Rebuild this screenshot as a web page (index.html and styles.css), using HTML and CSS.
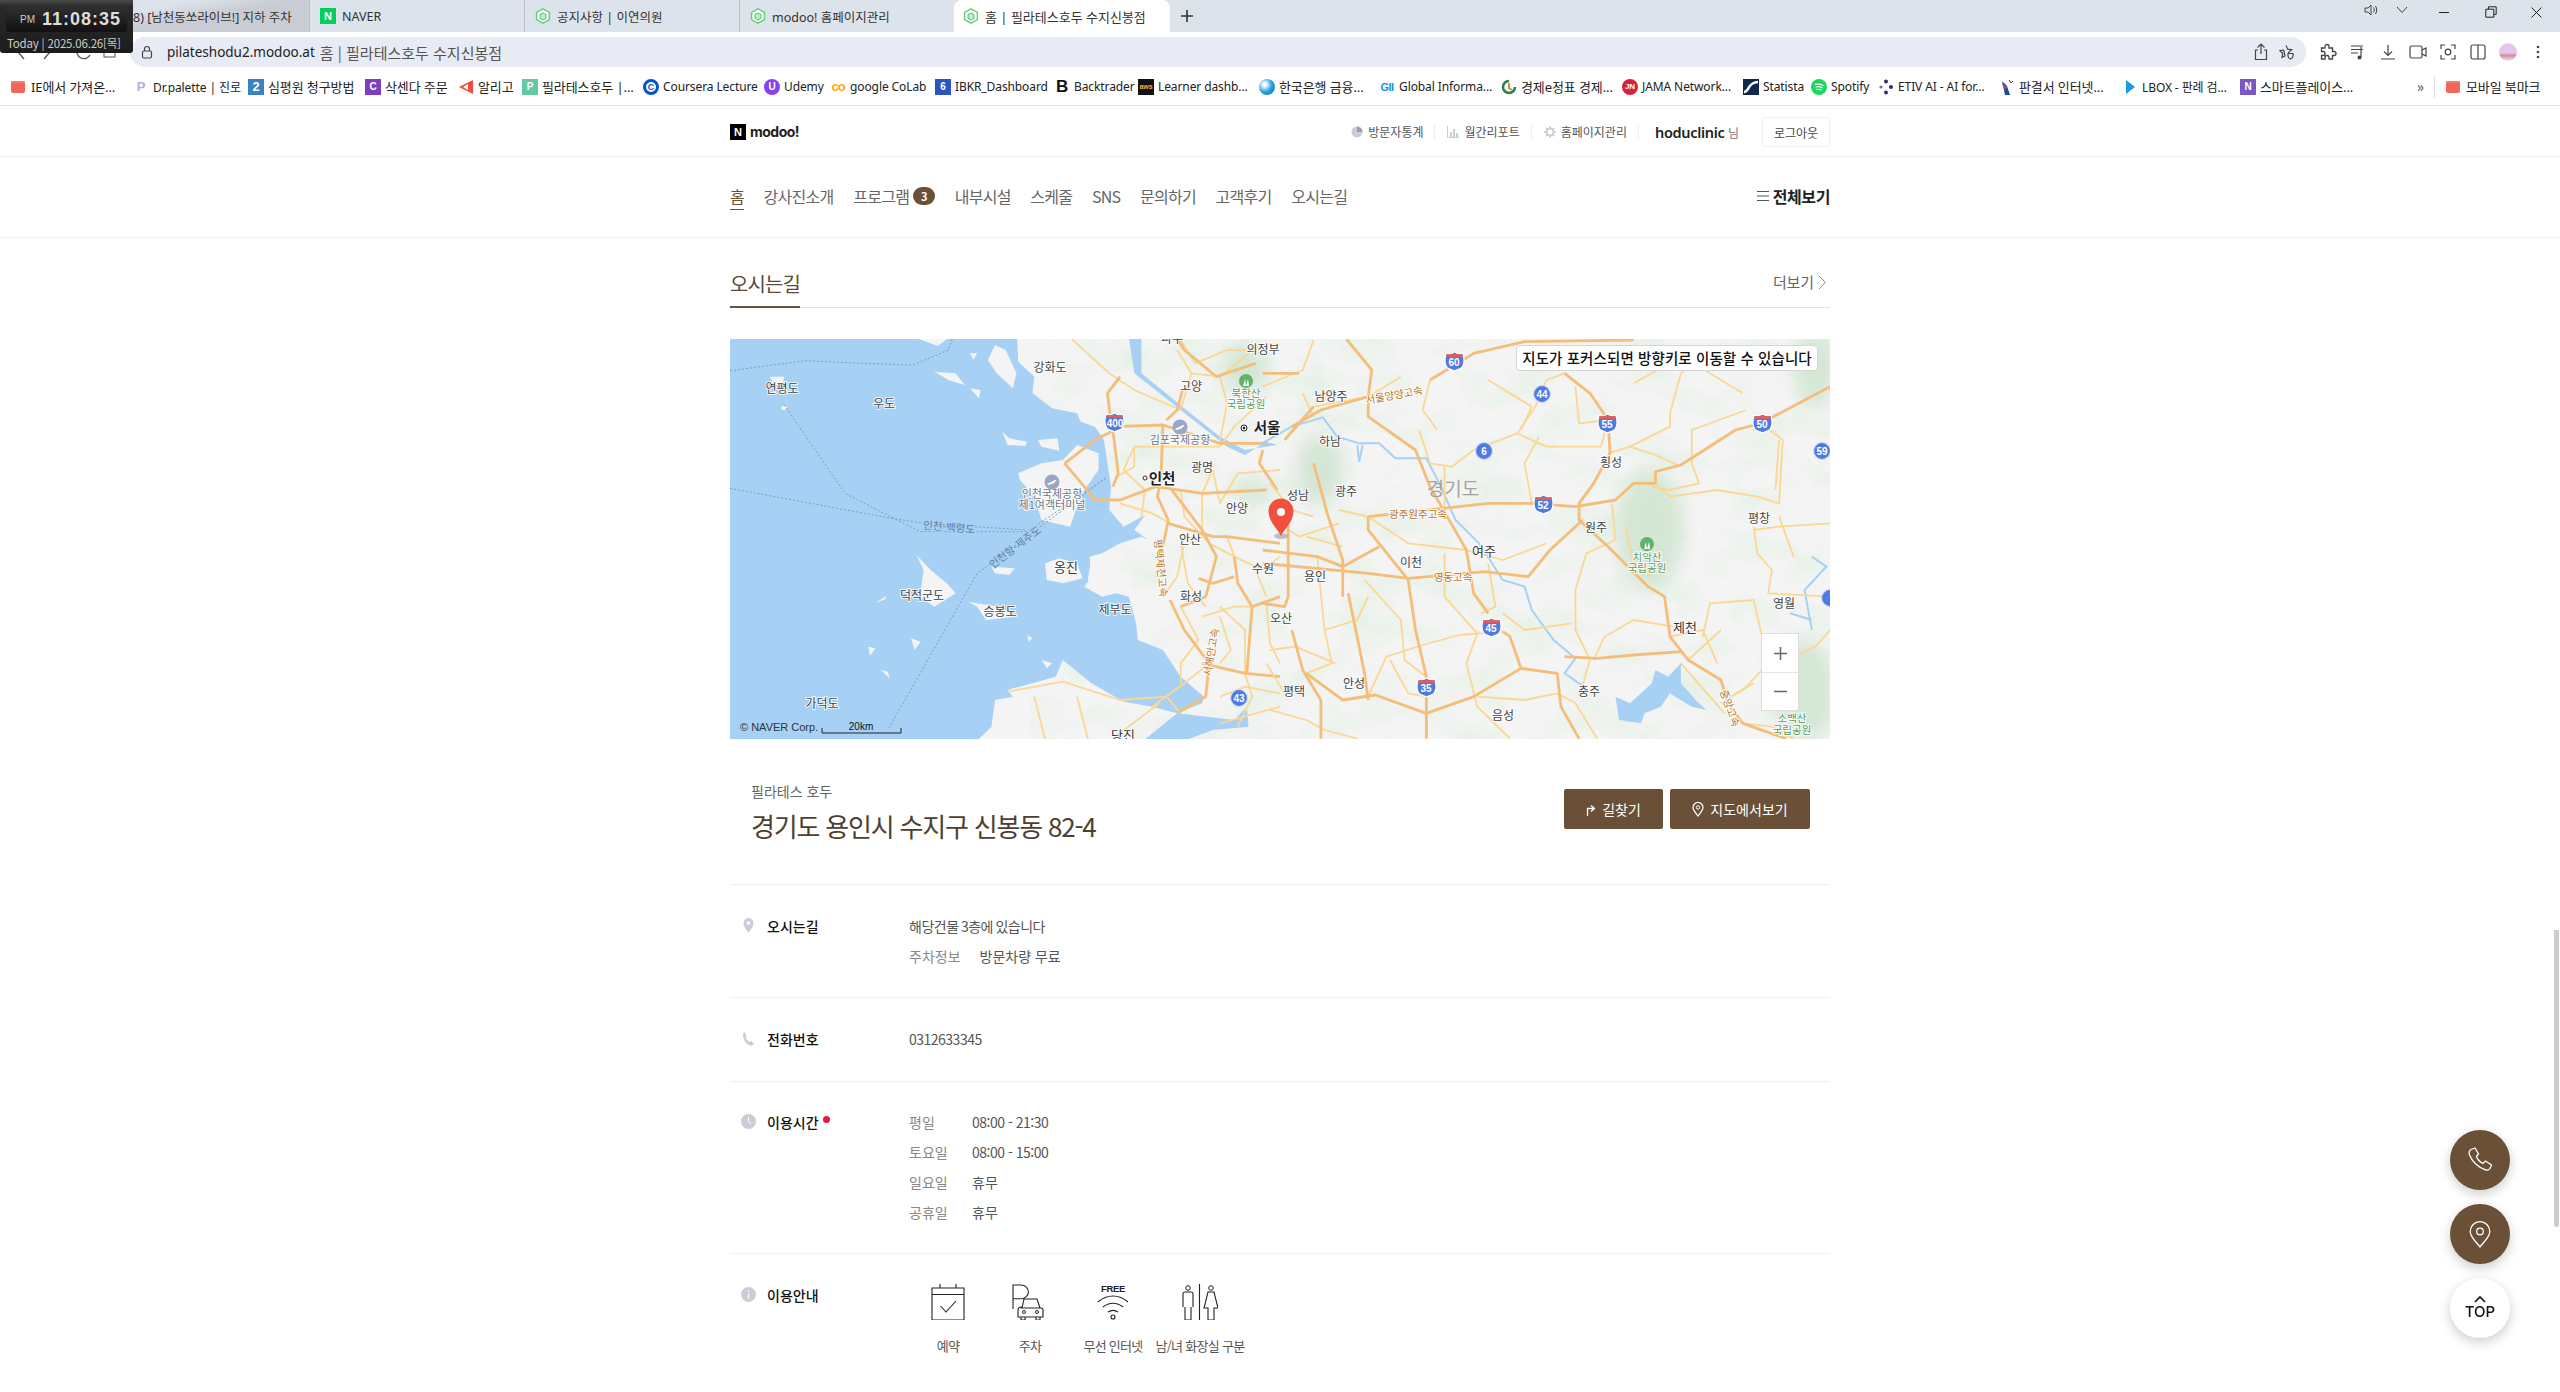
FILE: index.html
```html
<!DOCTYPE html>
<html lang="ko">
<head>
<meta charset="utf-8">
<title>홈 | 필라테스호두 수지신봉점</title>
<link rel="stylesheet" href="styles.css">
</head>
<body>
<svg class="defs" width="0" height="0" aria-hidden="true">
  <defs>
    <symbol id="hexfav" viewBox="0 0 16 16"><path d="M8 .8 14.400 4.400v7.200L8 15.200 1.600 11.600V4.400z" fill="#fff" stroke="#5fd47d" stroke-width="1.500"/><path d="M5 10.500V6.500L8 5l3 1.500v4L8 12z" fill="#bdecc8" stroke="#4cb868" stroke-width=".9"/></symbol>
    <symbol id="shield" viewBox="0 0 21 21"><path d="M2 2.500c3 1 5.500.5 8.500-1.500 3 2 5.500 2.500 8.500 1.500 1.500 6 1.500 11-1 14-2 2-5 2-7.500 3.500-2.500-1.500-5.500-1.500-7.500-3.500-2.500-3-2.500-8-1-14z" fill="#4f7ae0" stroke="#fff" stroke-width="1.200"/><rect x="2.500" y="3.200" width="16" height="2.600" fill="#ef5a4a"/></symbol>
  </defs>
</svg>

<div class="clock">
  <div class="clock-panel"><span class="clock-ap">PM</span><span class="clock-time">11:08:35</span></div>
  <div class="clock-date">Today | 2025.06.26[목]</div>
</div>

<header class="browser">
  <div class="tabs">
    <div class="tab tab-thumb"><span class="tab-title">8) [남천동쏘라이브!] 지하 주차</span></div>
    <div class="tab"><span class="fav-naver">N</span><span class="tab-title">NAVER</span></div>
    <div class="tab"><svg class="fav"><use href="#hexfav"/></svg><span class="tab-title">공지사항 | 이연의원</span></div>
    <div class="tab"><svg class="fav"><use href="#hexfav"/></svg><span class="tab-title">modoo! 홈페이지관리</span></div>
    <div class="tab tab-active"><svg class="fav"><use href="#hexfav"/></svg><span class="tab-title">홈 | 필라테스호두 수지신봉점</span></div>
    <div class="tab-plus">
      <svg width="14" height="14" viewBox="0 0 14 14"><path d="M7 1v12M1 7h12" stroke="#333" stroke-width="1.600"/></svg>
    </div>
    <div class="win-controls">
      <svg class="win-sound" width="16" height="14" viewBox="0 0 16 14"><path d="M2 5h3l3-3v10L5 9H2zM10.500 4.500c1 1.500 1 3.500 0 5M12.500 3c1.600 2.500 1.600 5.500 0 8" fill="none" stroke="#444"/></svg>
      <svg class="win-chev" width="12" height="8" viewBox="0 0 12 8"><path d="M1 1l5 5.500L11 1" fill="none" stroke="#444"/></svg>
      <svg class="win-min" width="10" height="10" viewBox="0 0 10 10"><path d="M0 5.500h10" stroke="#222"/></svg>
      <svg class="win-rest" width="12" height="12" viewBox="0 0 12 12"><path d="M3.500 3V.8h7.700v7.500H9M.8 3.200h8v8H.8z" fill="none" stroke="#222"/></svg>
      <svg class="win-close" width="11" height="11" viewBox="0 0 11 11"><path d="M.5.5l10 10M10.500.5l-10 10" stroke="#222"/></svg>
    </div>
  </div>

  <div class="toolbar">
    <div class="nav-btns">
      <svg width="130" height="30" viewBox="0 0 130 30"><path d="M24 8l-6 7 6 7M44 8l6 7-6 7M86 8a7 7 0 1 0 4 10" fill="none" stroke="#555" stroke-width="1.300"/><rect x="104" y="6" width="11" height="14" fill="none" stroke="#555"/></svg>
    </div>
    <div class="omnibox">
      <svg class="lock" width="12" height="14" viewBox="0 0 12 14"><rect x="1.500" y="6" width="9" height="7" rx="1.500" fill="none" stroke="#444" stroke-width="1.200"/><path d="M3.500 6V4a2.500 2.500 0 0 1 5 0v2" fill="none" stroke="#444" stroke-width="1.200"/></svg>
      <span class="url">pilateshodu2.modoo.at</span><span class="url-title">홈 | 필라테스호두 수지신봉점</span>
      <div class="omni-right">
        <svg width="14" height="18" viewBox="0 0 14 18"><path d="M7 1v10M3.500 4.500 7 1l3.500 3.500M4 7H1.500v9.500h11V7H10" fill="none" stroke="#444" stroke-width="1.200"/></svg>
        <svg width="16" height="16" viewBox="0 0 16 16"><path d="M7 1.500l1.700 3.700 4 .5-3 2.700.6 1M6 12l-3 1.500.7-4-3-2.800 4-.5z" fill="none" stroke="#444" stroke-width="1.200"/><path d="M9 9.500h5v2.500c0 1.500-1.200 2.500-2.500 3-1.300-.5-2.500-1.500-2.500-3z" fill="none" stroke="#444" stroke-width="1.200"/></svg>
      </div>
    </div>
    <div class="tool-icons">
      <svg width="18" height="18" viewBox="0 0 18 18"><path d="M6 3.500a2 2 0 0 1 4 0V5h3.500v3.500H15a2 2 0 0 1 0 4h-1.500V16H10v-1.500a2 2 0 0 0-4 0V16H2.500v-3.500H4a2 2 0 0 0 0-4H2.500V5H6z" fill="none" stroke="#444" stroke-width="1.300"/></svg>
      <svg width="14" height="18" viewBox="0 0 14 18"><path d="M0 3h12M0 6.500h12M0 10h7M10 4v10" stroke="#444" stroke-width="1.200" fill="none"/><circle cx="8.500" cy="14.500" r="2" fill="#444"/></svg>
      <svg width="16" height="18" viewBox="0 0 16 18"><path d="M8 2v10M4 8.500 8 12.500 12 8.500M1 16h14" fill="none" stroke="#444" stroke-width="1.200"/></svg>
      <svg width="18" height="14" viewBox="0 0 18 14"><rect x="1" y="1" width="12" height="12" rx="1.500" fill="none" stroke="#444" stroke-width="1.200"/><path d="M13 5l4-2v8l-4-2" fill="none" stroke="#444" stroke-width="1.200"/></svg>
      <svg width="16" height="16" viewBox="0 0 16 16"><path d="M1 5V1h4M11 1h4v4M15 11v4h-4M5 15H1v-4" fill="none" stroke="#444" stroke-width="1.200"/><circle cx="8" cy="8" r="2.800" fill="none" stroke="#444" stroke-width="1.200"/></svg>
      <svg width="16" height="16" viewBox="0 0 16 16"><rect x="1" y="1" width="14" height="14" rx="2" fill="none" stroke="#444" stroke-width="1.200"/><path d="M8 1v14" stroke="#444" stroke-width="1.200"/></svg>
      <span class="avatar"></span>
      <svg width="4" height="14" viewBox="0 0 4 14"><circle cx="2" cy="2" r="1.300" fill="#444"/><circle cx="2" cy="7" r="1.300" fill="#444"/><circle cx="2" cy="12" r="1.300" fill="#444"/></svg>
    </div>
  </div>

  <div class="bookmarks">
    <div class="bm ko"><span class="folder"></span>IE에서 가져온...</div>
    <div class="bm"><span class="ico ico-dr">P</span>Dr.palette | 진로</div>
    <div class="bm ko"><span class="ico ico-2">2</span>심평원 청구방법</div>
    <div class="bm ko"><span class="ico ico-c">C</span>삭센다 주문</div>
    <div class="bm ko"><svg class="ico-svg" viewBox="0 0 16 16"><path d="M15 1v14L1 8z" fill="#ef4b3f"/><path d="M10 5v6L5 8z" fill="#fff"/></svg>알리고</div>
    <div class="bm ko"><span class="ico ico-p">P</span>필라테스호두 |...</div>
    <div class="bm"><span class="ico ico-cs">C</span>Coursera Lecture</div>
    <div class="bm"><span class="ico ico-u">U</span>Udemy</div>
    <div class="bm"><span class="ico ico-co">co</span>google CoLab</div>
    <div class="bm"><span class="ico ico-ib">6</span>IBKR_Dashboard</div>
    <div class="bm"><span class="ico ico-b">B</span>Backtrader</div>
    <div class="bm"><span class="ico ico-aws">aws</span>Learner dashb...</div>
    <div class="bm ko"><span class="ico ico-bok"></span>한국은행 금융...</div>
    <div class="bm"><span class="ico ico-gii">GII</span>Global Informa...</div>
    <div class="bm ko"><svg class="ico-svg" viewBox="0 0 16 16"><path d="M8 2a6 6 0 1 0 6 6" fill="none" stroke="#2f7d4a" stroke-width="2.500"/><path d="M8 4v5l3 2" fill="none" stroke="#b59a3a" stroke-width="2"/></svg>경제e정표 경제...</div>
    <div class="bm"><span class="ico ico-jn">JN</span>JAMA Network...</div>
    <div class="bm"><svg class="ico-svg" viewBox="0 0 16 16"><rect width="16" height="16" fill="#12284a"/><path d="M1 13c5 0 4-10 14-10" fill="none" stroke="#fff" stroke-width="2.500"/></svg>Statista</div>
    <div class="bm"><svg class="ico-svg" viewBox="0 0 16 16"><circle cx="8" cy="8" r="8" fill="#1ed760"/><path d="M4 5.500c3-.8 6-.5 8.500 1M4.500 8c2.500-.6 5-.4 7 .9M5 10.500c2-.4 4-.3 5.500.7" fill="none" stroke="#fff" stroke-width="1.200"/></svg>Spotify</div>
    <div class="bm"><svg class="ico-svg" viewBox="0 0 16 16"><circle cx="8" cy="2.500" r="2" fill="#2a2f7a"/><circle cx="13" cy="8" r="2" fill="#2a2f7a"/><circle cx="8" cy="13.500" r="2" fill="#2a2f7a"/><circle cx="3" cy="8" r="1.600" fill="#7d5fc0"/></svg>ETIV AI - AI for...</div>
    <div class="bm ko"><svg class="ico-svg" viewBox="0 0 16 16"><path d="M3 2l5 5 3 9H6z" fill="#15508c"/><path d="M3 5l5 3-2 3z" fill="#d8327a"/><path d="M10 1l2 3 2-2" fill="none" stroke="#444"/></svg>판결서 인터넷...</div>
    <div class="bm"><svg class="ico-svg" viewBox="0 0 16 16"><path d="M4 1l9 7-9 7z" fill="#1c9be0"/></svg>LBOX - 판례 검...</div>
    <div class="bm ko"><span class="ico ico-n">N</span>스마트플레이스...</div>
    <div class="bm bm-more">»</div>
    <div class="bm-sep"></div>
    <div class="bm ko"><span class="folder"></span>모바일 북마크</div>
  </div>
</header>

<div class="site">
  <div class="gnb-top">
    <div class="logo"><span class="logo-n">N</span><span class="logo-t">modoo!</span></div>
    <div class="top-links">
      <a class="tl"><svg width="12" height="12" viewBox="0 0 12 12"><circle cx="6" cy="6" r="5.500" fill="#c9ced6"/><path d="M6 6V.5A5.500 5.500 0 0 1 11.500 6z" fill="#9aa0a8"/></svg>방문자통계</a>
      <a class="tl"><svg width="12" height="12" viewBox="0 0 12 12"><path d="M.5 0v11.500H12" fill="none" stroke="#c9ced6"/><path d="M3 6h2v5H3zM6 3h2v8H6zM9 7h2v4H9z" fill="#c9ced6"/></svg>월간리포트</a>
      <a class="tl"><svg width="12" height="12" viewBox="0 0 12 12"><circle cx="6" cy="6" r="3.500" fill="none" stroke="#c9ced6" stroke-width="2"/><path d="M6 0v2.500M6 9.500V12M0 6h2.500M9.500 6H12M1.800 1.800l1.800 1.800M8.400 8.400l1.800 1.800M10.200 1.800 8.400 3.600M3.600 8.400l-1.800 1.800" stroke="#c9ced6" stroke-width="1.500"/></svg>홈페이지관리</a>
      <span class="user"><b>hoduclinic</b> 님</span>
      <button class="logout">로그아웃</button>
    </div>
  </div>

  <nav class="gnb">
    <a class="gi gi-on">홈</a>
    <a class="gi">강사진소개</a>
    <a class="gi">프로그램<span class="badge">3</span></a>
    <a class="gi">내부시설</a>
    <a class="gi">스케줄</a>
    <a class="gi">SNS</a>
    <a class="gi">문의하기</a>
    <a class="gi">고객후기</a>
    <a class="gi">오시는길</a>
    <a class="gi-all"><svg width="14" height="12" viewBox="0 0 14 12"><path d="M1 1.500h12M1 6h12M1 10.500h12" stroke="#555" stroke-width="1"/></svg>전체보기</a>
  </nav>
</div>
<div class="rule"></div>

<main class="site">
  <div class="sec-head">
    <h2 class="sec-title">오시는길</h2>
    <a class="more">더보기<svg width="9" height="15" viewBox="0 0 9 15"><path d="M1 1l6.500 6.500L1 14" fill="none" stroke="#888"/></svg></a>
  </div>

  <div class="map">
    <svg class="map-svg" width="1100" height="400" viewBox="0 -1 1100 400">
      <defs>
        <filter id="forest" x="0" y="0" width="100%" height="100%">
          <feTurbulence type="fractalNoise" baseFrequency="0.018 0.03" numOctaves="4" seed="7"/>
          <feColorMatrix values="0 0 0 0 0.80  0 0 0 0 0.88  0 0 0 0 0.80  2.600 0 0 0 -1.150"/>
        </filter>
        <filter id="soft"><feGaussianBlur stdDeviation="9"/></filter>
      </defs>
      <rect class="land" y="-1" width="1100" height="400"/>
      <rect x="300" y="-1" width="800" height="400" filter="url(#forest)"/>
      <g filter="url(#soft)" class="parks">
        <ellipse cx="920" cy="190" rx="34" ry="60"/>
        <ellipse cx="590" cy="130" rx="24" ry="36"/>
        <ellipse cx="1075" cy="350" rx="30" ry="50"/>
        <ellipse cx="516" cy="30" rx="24" ry="26"/>
        <ellipse cx="520" cy="150" rx="20" ry="12"/>
        <ellipse cx="1085" cy="30" rx="20" ry="40"/>
      </g>

      <!-- west half, in the scale of the crop of the left half -->
      <g transform="translate(-10,-10) scale(.35714,.33333)">
        <path class="sea" d="M28 24H832L835 95 880 140 875 190 930 235 1000 250 1010 275 1050 290 1075 330 1085 400 1095 470 1090 540 1130 590 1190 555 1160 600 1200 630 1180 620 1120 640 1070 670 1035 680 1040 740 1020 770 1070 800 1110 790 1145 800 1165 880 1170 930 1240 960 1290 1040 1355 1100 1350 1120 1280 1150 1210 1130 1130 1115 1040 1060 960 990 940 1040 805 1080 820 1100 770 1110 760 1190 720 1232H28Z"/>
        <path class="sea" d="M1280 1150 1440 1170 1475 1130 1480 1190 1380 1200 1300 1232H1185Z"/>
        <path class="sea" d="M1180 24H1145L1160 130 1290 240 1420 350 1470 375 1530 335 1560 345 1470 360 1400 320 1300 235 1180 130Z"/>
        <g class="land">
          <path d="M835 430 900 400 960 390 1000 345 1060 370 1060 420 1020 480 1000 530 980 590 900 570 880 500 840 450Z"/>
          <path d="M750 90 770 45 800 60 830 130 820 175 775 130Z"/>
          <path d="M790 305 810 325 860 335 855 348 805 345Z"/><path d="M890 330 945 325 950 362 900 350Z"/>
          <path d="M550 675 590 720 635 760 660 790 600 830 560 800 570 720Z"/>
          <path d="M910 700 950 685 1000 700 1015 745 960 760 915 750Z"/>
          <path d="M760 710 825 715 810 735 770 730Z"/>
          <path d="M695 815 780 830 830 860 745 870 720 830Z"/>
          <path d="M140 140 180 140 175 165 150 165Z"/><path d="M172 228 188 228 184 240 172 240Z"/>
          <path d="M600 125 660 130 685 165 640 150Z"/><path d="M700 70 720 70 710 90Z"/><path d="M700 175 730 180 725 205Z"/>
          <path d="M535 925 562 935 545 960Z"/><path d="M415 950 435 955 420 978Z"/><path d="M450 1020 470 1025 475 1045Z"/>
          <path d="M860 915 875 925 865 935Z"/><path d="M900 990 930 1000 915 1015Z"/><path d="M435 820 465 798 462 808Z"/>
          <path d="M1040 680 1110 700 1120 780 1060 790 1030 750Z"/>
          <path d="M550 24 640 24 610 48Z"/>
        </g>
        <g class="ferry">
          <path d="M28 122 240 92 400 100 540 105 640 60 650 27"/>
          <path d="M180 225 350 490 560 605 860 605 1080 445"/>
          <path d="M28 475 480 565 570 580 860 600"/>
          <path d="M1080 445 720 730 470 1200"/>
        </g>
        <g class="rd2">
          <path d="M985 27 1090 130 1160 180 1290 240 1320 130 1280 60"/>
          <path d="M1160 350H1400L1440 290 1530 200"/>
          <path d="M1160 350V410L1110 440"/>
          <path d="M1320 130 1400 140 1480 70"/>
          <path d="M1380 420 1400 520 1450 430 1568 420"/>
          <path d="M1120 520 1210 550 1260 580"/>
          <path d="M1290 640 1310 760 1360 830"/>
          <path d="M1440 680 1520 720 1568 680"/>
          <path d="M1290 830 1340 930 1290 1000 1290 1060"/>
          <path d="M1400 860 1430 960 1400 1000"/>
          <path d="M1350 860 1440 830 1490 830"/>
          <path d="M805 1085 960 1055 1120 1110 1250 1100 1290 1150"/>
          <path d="M880 1100 910 1226M1000 1100 1030 1226M1100 1226 1230 1120"/>
          <path d="M1400 1100 1470 1070 1568 1090M1400 1180 1568 1130"/>
          <path d="M1160 350 1130 420 1190 480 1180 560"/>
          <path d="M1290 480 1300 560 1370 640 1440 680"/>
          <path d="M1380 420 1350 490 1350 600"/>
          <path d="M1300 640 1280 740 1240 800"/>
          <path d="M1420 620 1440 680"/>
          <path d="M1290 30 1330 100 1420 60 1530 60"/>
          <path d="M1400 140 1420 220 1400 330"/>
          <path d="M1500 720 1530 800"/>
          <path d="M1370 1000 1300 1060 1210 1130"/>
          <path d="M1470 1030 1490 1100 1450 1190"/>
          <path d="M1530 820 1540 940 1568 1000"/>
          <path d="M1400 830 1470 900 1470 1030"/>
        </g>
        <g class="rd1">
          <path d="M1105 290 1240 285 1400 340 1530 340"/>
          <path d="M965 400 1050 330 1105 300"/>
          <path d="M965 400 1020 470 1050 510 1120 510 1220 470 1350 490 1530 480"/>
          <path d="M1100 300 1115 430 1100 470"/>
          <path d="M1240 285 1235 440 1225 500 1255 570 1240 650"/>
          <path d="M1255 580 1380 620 1420 620 1568 640"/>
          <path d="M1120 140 1085 190 1095 280"/>
          <path d="M1295 180 1280 240 1250 270"/>
          <path d="M1265 480 1350 600 1390 680 1360 800 1290 830"/>
          <path d="M1260 810 1300 900 1370 1000 1360 1100 1280 1150"/>
          <path d="M1350 1000 1470 1030 1568 1040"/>
          <path d="M1490 830 1475 1030"/>
          <path d="M1440 680 1450 760 1490 830 1568 800"/>
          <path d="M1340 745 1380 760 1440 740"/>
          <path d="M1520 360 1510 400 1560 480"/>
          <path d="M1500 100 1390 140 1300 60 1280 27"/>
        </g>
      </g>

      <!-- east half, in the scale of the crop of the right half -->
      <g transform="translate(540,-10) scale(.36364,.33333)">
        <g class="river">
          <path d="M-30 345 60 290 145 262 185 320 245 340 300 340 345 385 430 385 470 470 510 570 575 640 640 750 700 770 720 840 780 930 840 985 810 1030 870 1075"/>
          <path d="M240 345 245 395 255 345"/>
          <path d="M1490 680 1530 710 1470 780 1490 900"/>
          <path d="M1430 850 1490 870"/>
        </g>
        <path class="sea" d="M950 1100 990 1120 1050 1060 1060 1020 1095 1040 1130 1000 1130 1060 1175 1115 1200 1140 1160 1130 1100 1090 1075 1130 1030 1150 1020 1180 960 1170Z"/>
        <g class="rd2">
          <path d="M-20 170 90 120 120 30M120 230 270 200 360 140M90 190 120 260"/>
          <path d="M560 360 680 310 730 230 760 150 810 130"/>
          <path d="M410 300 440 400 500 410 560 360"/>
          <path d="M680 310 760 350 910 350 930 270 850 280 840 170"/>
          <path d="M930 370 990 350 1100 290 1100 250 1130 130 1190 60"/>
          <path d="M990 350 1060 375 1120 405M1160 400 1160 300 1310 240"/>
          <path d="M1060 460 1100 500 1230 480 1340 500 1400 520 1410 330 1350 280"/>
          <path d="M1330 590 1340 670 1380 720 1370 790 1540 800"/>
          <path d="M1330 600 1400 590 1540 580M1350 280 1420 240 1540 170"/>
          <path d="M940 520 950 630 870 670 840 780 840 900 880 990 850 1100"/>
          <path d="M1110 890 1000 870 920 920 890 990"/>
          <path d="M1190 920 1210 820 1330 810 1370 1000 1310 1070 1240 1120"/>
          <path d="M640 905 520 915 420 945 320 980 270 1100"/>
          <path d="M480 670 480 800 570 910 540 1000 570 1130 660 1226"/>
          <path d="M190 540 270 560 380 640 540 660 640 690 760 640"/>
          <path d="M0 560 80 620 190 580M130 680 150 900 170 1000 100 1030"/>
          <path d="M260 750 360 870 370 990 430 1040M600 700 620 830 580 850"/>
          <path d="M790 1090 840 1120 900 1226M570 1100 700 1110 790 1090"/>
          <path d="M0 1140 100 1170 150 1200 240 1226M-10 1000 40 1090"/>
          <path d="M1300 1180 1380 1190 1440 1226M1130 1000 1250 1150"/>
          <path d="M1440 680 1400 560"/>
          <path d="M0 460 60 540 120 560M100 620 200 650"/>
          <path d="M330 990 380 1090 430 1100M640 850 700 900 830 880"/>
          <path d="M980 600 1000 700 1050 740M1100 920 1190 900 1230 1000"/>
          <path d="M1050 470 1100 480 1180 460 1160 400M1400 330 1390 480"/>
          <path d="M480 410 480 530M740 320 700 400 720 520"/>
          <path d="M1000 160 1100 100 1150 90 1300 190M600 150 720 230 690 300"/>
          <path d="M440 150 420 240 460 300M150 900 240 870 270 800"/>
          <path d="M1400 1000 1500 950 1540 900M1150 990 1240 900"/>
          <path d="M1240 1120 1330 1060M0 960 70 950 180 1000"/>
        </g>
        <g class="rd1">
          <path d="M270 200 270 260 400 360 440 470 540 660 560 790 600 850"/>
          <path d="M270 560 600 520 720 520 840 530 950 510 1000 460 1060 460 1060 425 1130 405 1280 300 1350 280"/>
          <path d="M120 400 160 560 200 690 200 800"/>
          <path d="M-20 660 130 680 200 710 300 650"/>
          <path d="M-20 700 270 730 380 745 590 725 710 740 770 660 860 570"/>
          <path d="M810 130 880 190 930 270 935 370 890 460 850 520 850 570 930 650 1040 770 1085 800 1100 920 1150 990 1240 1050 1260 1120"/>
          <path d="M270 560 270 600 380 750 400 900 430 1040 430 1226"/>
          <path d="M100 1030 200 1110 290 1095 430 1150 560 1100 690 1015 790 1030 800 1130 850 1226"/>
          <path d="M690 1015 660 920 640 905"/>
          <path d="M810 980 900 985 1000 975 1130 965"/>
          <path d="M50 580V800L40 830-20 820"/>
          <path d="M60 900 90 1020 140 1110 140 1226"/>
          <path d="M215 790 260 1030 270 1110"/>
          <path d="M210 27 280 120 270 200 140 240 60 290"/>
          <path d="M440 150 560 70 700 35 1000 30"/>
          <path d="M1260 1120 1300 1180 1420 1226"/>
          <path d="M1350 280 1540 170"/>
          <path d="M-20 130 80 130M120 230 40 330"/>
        </g>
      </g>

      <!-- labels -->
      <g class="lb">
        <text x="320" y="32">강화도</text><text x="52" y="53">연평도</text><text x="154" y="68">우도</text>
        <text x="461" y="51">고양</text><text x="533" y="14">의정부</text><text x="442" y="3" class="lb-r">파주</text>
        <text x="450" y="104" class="lb-g">김포국제공항</text>
        <text x="472" y="132">광명</text><text x="322" y="158" class="lb-g">인천국제공항</text><text x="322" y="169" class="lb-g">제1여객터미널</text>
        <text x="507" y="173">안양</text><text x="460" y="204">안산</text><text x="533" y="233">수원</text>
        <text x="336" y="232" class="lb-b">옹진</text><text x="192" y="260">덕적군도</text><text x="461" y="261">화성</text>
        <text x="385" y="274">제부도</text><text x="270" y="276">승봉도</text><text x="92" y="368">가덕도</text><text x="393" y="400" class="lb-b">당진</text>
        <text x="551" y="283">오산</text><text x="601" y="61">남양주</text><text x="600" y="106">하남</text><text x="568" y="160">성남</text>
        <text x="616" y="156">광주</text><text x="754" y="216" class="lb-b">여주</text><text x="681" y="227">이천</text><text x="585" y="241">용인</text>
        <text x="881" y="127">횡성</text><text x="866" y="192">원주</text><text x="1029" y="183">평창</text><text x="1054" y="268">영월</text>
        <text x="955" y="292" class="lb-b">제천</text><text x="624" y="348">안성</text><text x="564" y="356">평택</text><text x="773" y="380">음성</text><text x="859" y="356">충주</text>
        <text x="432" y="144" class="lb-city">인천</text><text x="537" y="93" class="lb-city">서울</text>
        <text x="723" y="156" class="lb-do">경기도</text>
        <text x="516" y="57" class="lb-park">북한산</text><text x="516" y="68" class="lb-park">국립공원</text>
        <text x="917" y="221" class="lb-park">치악산</text><text x="917" y="232" class="lb-park">국립공원</text>
        <text x="1062" y="382" class="lb-park">소백산</text><text x="1062" y="394" class="lb-park">국립공원</text>
        <text x="664" y="59" class="lb-hw" transform="rotate(-10 664 55)">서울양양고속</text>
        <text x="688" y="178" class="lb-hw">광주원주고속</text>
        <text x="723" y="241" class="lb-hw">영동고속</text>
        <text x="431" y="232" class="lb-hw" transform="rotate(84 431 228)">평택제천고속</text>
        <text x="481" y="316" class="lb-hw" transform="rotate(-80 481 312)">서해안고속</text>
        <text x="1000" y="372" class="lb-hw" transform="rotate(70 1000 368)">중앙고속</text>
        <text x="219" y="191" class="lb-sea" transform="rotate(5 219 187)">인천-백령도</text>
        <text x="285" y="211" class="lb-sea" transform="rotate(-37 285 207)">인천항-제주도</text>
      </g>
      <circle class="city-dot" cx="514" cy="88" r="3"/><circle cx="514" cy="88" r="1.300" fill="#222"/>
      <circle class="town-dot" cx="415" cy="138" r="2"/>
      <g class="air"><circle cx="450" cy="87" r="7.500"/><path d="M445 89l8-4 1.500 .5-3 3-5 1.500z"/></g>
      <g class="air"><circle cx="322" cy="142" r="7.500"/><path d="M317 144l8-4 1.500 .5-3 3-5 1.500z"/></g>
      <g class="tree"><circle cx="516" cy="41" r="7"/><path d="M513 46l2-7 1 7zM516 46l2-7 1 7z"/></g>
      <g class="tree"><circle cx="917" cy="204" r="7"/><path d="M914 209l2-7 1 7zM917 209l2-7 1 7z"/></g>

      <g class="shields">
        <use href="#shield" x="374" y="72" width="21" height="21"/><text x="385" y="87">400</text>
        <use href="#shield" x="714" y="11" width="21" height="21"/><text x="724" y="26">60</text>
        <use href="#shield" x="867" y="73" width="21" height="21"/><text x="877" y="88">55</text>
        <use href="#shield" x="1022" y="73" width="21" height="21"/><text x="1032" y="88">50</text>
        <use href="#shield" x="803" y="154" width="21" height="21"/><text x="813" y="169">52</text>
        <use href="#shield" x="751" y="277" width="21" height="21"/><text x="761" y="292">45</text>
        <use href="#shield" x="686" y="337" width="21" height="21"/><text x="696" y="352">35</text>
        <g class="ring"><circle cx="812" cy="54" r="8.500"/><circle cx="754" cy="111" r="8.500"/><circle cx="1092" cy="111" r="8.500"/><circle cx="509" cy="358" r="8.500"/><circle cx="1100" cy="258" r="8.500"/></g>
        <text x="812" y="58">44</text><text x="754" y="115">6</text><text x="1092" y="115">59</text><text x="509" y="362">43</text>
      </g>

      <ellipse cx="551" cy="196" rx="7" ry="3" fill="#9a9a9a" opacity=".6"/>
      <path class="pin" d="M551 196c-3-7-12.500-14-12.500-25a12.500 12.500 0 0 1 25 0c0 11-9.500 18-12.500 25z"/>
      <circle cx="551" cy="172" r="4" fill="#fff"/>

      <text x="10" y="391" class="copy">© NAVER Corp.</text>
      <text x="131" y="390" class="scale-t">20km</text>
      <path class="scale" d="M92 388v5h79v-5"/>
    </svg>
    <div class="map-tip">지도가 포커스되면 방향키로 이동할 수 있습니다</div>
    <div class="zoom-ctl">
      <button class="zoom-btn"><svg width="13" height="13" viewBox="0 0 13 13"><path d="M6.500 0v13M0 6.500h13" stroke="#666" stroke-width="1.500"/></svg></button>
      <button class="zoom-btn"><svg width="13" height="13" viewBox="0 0 13 13"><path d="M0 6.500h13" stroke="#666" stroke-width="1.500"/></svg></button>
    </div>
  </div>

  <section class="place">
    <div>
      <p class="place-name">필라테스 호두</p>
      <p class="place-addr">경기도 용인시 수지구 신봉동 82-4</p>
    </div>
    <div class="place-btns">
      <a class="btn btn-route"><svg width="10" height="14" viewBox="0 0 10 14"><path d="M1.500 14V6.500h6M5 3.500l3.500 3-3.500 3" fill="none" stroke="#fff" stroke-width="1.300"/></svg>길찾기</a>
      <a class="btn btn-map"><svg width="12" height="15" viewBox="0 0 12 15"><path d="M6 14C4.500 11.500 1 8.500 1 5.500a5 5 0 0 1 10 0C11 8.500 7.500 11.500 6 14z" fill="none" stroke="#fff" stroke-width="1.200"/><circle cx="6" cy="5.500" r="1.700" fill="none" stroke="#fff"/></svg>지도에서보기</a>
    </div>
  </section>

  <section class="info">
    <div class="row row-way">
      <div class="lab"><svg class="lab-ico" viewBox="0 0 15 15"><path d="M7.500 15C6 12 2.500 9 2.500 5a5 5 0 0 1 10 0c0 4-3.500 7-5 10z" fill="#c9ced6"/><circle cx="7.500" cy="5" r="1.800" fill="#fff"/></svg>오시는길</div>
      <div class="val">
        <p class="tight">해당건물 3층에 있습니다</p>
        <p><span class="key key-park">주차정보</span>방문차량 무료</p>
      </div>
    </div>
    <div class="row row-tel">
      <div class="lab"><svg class="lab-ico" viewBox="0 0 15 15"><path d="M3.500 1l2 3.500-1 1.500c.5 2 2 3.800 4 5l1.800-1 2.700 2.500c-.8 1.600-2 2.200-3.500 2C5 13.500 1.500 8 2 2.500z" fill="#c9ced6"/></svg>전화번호</div>
      <div class="val"><p class="num">0312633345</p></div>
    </div>
    <div class="row row-time">
      <div class="lab"><svg class="lab-ico" viewBox="0 0 15 15"><circle cx="7.500" cy="7.500" r="7.500" fill="#c9ced6"/><path d="M7.500 3v5l3 2" fill="none" stroke="#fff"/></svg>이용시간<span class="dot"></span></div>
      <div class="val">
        <p class="hour"><span class="key">평일</span><span class="num">08:00 - 21:30</span></p>
        <p class="hour"><span class="key">토요일</span><span class="num">08:00 - 15:00</span></p>
        <p class="hour"><span class="key">일요일</span><span>휴무</span></p>
        <p class="hour"><span class="key">공휴일</span><span>휴무</span></p>
      </div>
    </div>
    <div class="row row-use">
      <div class="lab"><svg class="lab-ico" viewBox="0 0 15 15"><circle cx="7.500" cy="7.500" r="7.500" fill="#c9ced6"/><path d="M7.500 6.500v5M7.500 3.500v1.500" stroke="#fff" stroke-width="1.300"/></svg>이용안내</div>
      <div class="amen">
        <div class="am">
          <svg class="am-ico" width="36" height="36" viewBox="0 0 36 36"><path d="M2 4h32v32H2zM2 10.500h32M10 0v4M26 0v4M10.500 22l5.500 6 10-11" fill="none" stroke="#222" stroke-width="1.100"/></svg>
          <span>예약</span>
        </div>
        <div class="am">
          <svg class="am-ico" width="36" height="36" viewBox="0 0 36 36"><path d="M1 25V1h8a7.500 7.500 0 0 1 7.500 7.500V8a7.500 7.500 0 0 1-7 6.800H1M10 24l2-9h13l3 9M9 24h20a2 2 0 0 1 2 2v7H6v-7a3 3 0 0 1 3-3zM9 33v3h4v-3M24 33v3h4v-3" fill="none" stroke="#222" stroke-width="1.100"/><circle cx="12" cy="28" r="1.500" fill="none" stroke="#222"/><circle cx="25" cy="28" r="1.500" fill="none" stroke="#222"/></svg>
          <span>주차</span>
        </div>
        <div class="am">
          <svg class="am-ico" width="36" height="36" viewBox="0 0 36 36"><text x="18" y="8" class="free">FREE</text><path d="M3 18c9-8 21-8 30 0M8 23c6-5 14-5 20 0M13 28c3-2 7-2 10 0" fill="none" stroke="#222" stroke-width="1.100"/><circle cx="18" cy="33" r="2" fill="none" stroke="#222" stroke-width="1.100"/></svg>
          <span>무선 인터넷</span>
        </div>
        <div class="am am-wide">
          <svg class="am-ico" width="36" height="36" viewBox="0 0 36 36"><circle cx="6" cy="4" r="2.300" fill="none" stroke="#222"/><path d="M1 23V10a2 2 0 0 1 2-2h6a2 2 0 0 1 2 2v13M3 23v13h6V23M17.500 0v36" fill="none" stroke="#222" stroke-width="1.100"/><circle cx="29" cy="4" r="2.300" fill="none" stroke="#222"/><path d="M26 8h6l4 16h-4v12h-6V24h-4z" fill="none" stroke="#222" stroke-width="1.100"/></svg>
          <span>남/녀 화장실 구분</span>
        </div>
      </div>
    </div>
  </section>
</main>

<div class="float-btns">
  <a class="fab fab-brown"><svg width="26" height="26" viewBox="0 0 26 26"><path d="M4 2.500 8 1l3.500 6-2 2.500c1 3 3.500 5.500 6.500 7l2.500-2.500 6 4-1.500 3.500c-1 1.500-3 2-5 1.200C11 20 5 14 2.500 8 1.800 5.800 2.500 3.500 4 2.500z" fill="none" stroke="#fff" stroke-width="1.300"/></svg></a>
  <a class="fab fab-brown"><svg width="22" height="27" viewBox="0 0 22 27"><path d="M11 26C8 21.500 1.200 16.500 1.200 10.500a9.800 9.800 0 0 1 19.600 0C20.800 16.500 14 21.500 11 26z" fill="none" stroke="#fff" stroke-width="1.300"/><circle cx="11" cy="10.500" r="3.300" fill="none" stroke="#fff" stroke-width="1.300"/></svg></a>
  <a class="fab fab-top"><svg width="12" height="7" viewBox="0 0 12 7"><path d="M1 6l5-5 5 5" fill="none" stroke="#111" stroke-width="1.700"/></svg><span>TOP</span></a>
</div>
<div class="scroll-thumb"></div>
</body>
</html>
```

FILE: styles.css
```css
* { box-sizing: border-box; }
html, body { margin: 0; padding: 0; height: 1392px; overflow: hidden; background: #fff; }
body { position: relative; font-family: "Noto Sans CJK KR", "Noto Sans", sans-serif; color: #333; }
p, h2 { margin: 0; font-weight: 400; }
a { color: inherit; text-decoration: none; }
.defs { position: absolute; }

/* desktop clock widget */
.clock { position: absolute; left: 0; top: 0; width: 133px; height: 53px; z-index: 5; background: linear-gradient(#4b4b4b, #2a2a2a 12%, #1c1c1c); border-radius: 0 0 3px 3px; padding: 6px 6px 0; color: #eee; font-family: "Liberation Sans", sans-serif; }
.clock-panel { height: 26px; background: linear-gradient(#303030, #111); border-radius: 3px; display: flex; align-items: center; padding-left: 14px; gap: 7px; }
.clock-ap { font-size: 10px; color: #ccc; }
.clock-time { font-size: 18px; font-weight: 700; letter-spacing: 1px; color: #ddd; }
.clock-date { font-size: 11.500px; color: #ccc; margin-top: 4px; padding-left: 1px; white-space: nowrap; font-family: "Noto Sans CJK KR", sans-serif; letter-spacing: -.2px; line-height: 14px; }

/* browser chrome */
.browser { height: 106px; border-bottom: 1px solid #e6e6e6; font-family: "Noto Sans", "Noto Sans CJK KR", sans-serif; }
.tabs { height: 32px; background: #dde3ea; display: grid; grid-template-columns: 309px 215px 215px 215px 216px 34px 1fr; align-items: stretch; }
.tab { display: flex; align-items: center; padding: 0 0 0 10px; font-size: 12.500px; color: #333; gap: 6px; white-space: nowrap; overflow: hidden; position: relative; border-left: 1px solid #b9bfc7; background-clip: padding-box; }
.tab:first-child { border-left: 0; }
.tab-thumb { padding-left: 133px; background: linear-gradient(170deg, #dde3ea 40%, #c9cdd3 60%); }
.tab-active { background: #fff; border-radius: 8px 8px 0 0; border-left: 0; padding-left: 9px; font-size: 13px; }
.tab-title { overflow: hidden; }
.fav { width: 16px; height: 16px; flex: none; }
.fav-naver { width: 16px; height: 16px; flex: none; background: #03cf5d; color: #fff; font: 700 11px/16px "Liberation Sans", sans-serif; text-align: center; }
.tab-plus { display: flex; align-items: center; justify-content: center; }
.win-controls { display: flex; align-items: center; justify-content: flex-end; padding: 0 18px 8px 0; }
.win-sound { margin-right: 17px; margin-top: -4px; }
.win-chev { margin-right: 31px; margin-top: -4px; }
.win-min { margin-right: 36px; }
.win-rest { margin-right: 34px; }

.toolbar { height: 36px; background: #fff; display: flex; align-items: center; position: relative; }
.nav-btns { width: 130px; height: 30px; overflow: hidden; margin-top: 4px; }
.omnibox { width: 2176px; height: 30px; margin-top: 4px; background: #e8ebf3; border-radius: 15px; display: flex; align-items: center; padding-left: 11px; font-size: 14px; }
.lock { margin-right: 14px; flex: none; }
.url { color: #222; font-size: 13.500px; }
.url-title { color: #555; margin-left: 5px; font-size: 15px; font-family: "Noto Sans CJK KR", sans-serif; }
.omni-right { margin-left: auto; display: flex; align-items: center; gap: 11px; padding-right: 11px; }
.tool-icons { display: grid; grid-template-columns: repeat(8, 30px); justify-items: center; align-items: center; margin-top: 4px; padding-left: 7px; }
.avatar { width: 18px; height: 18px; border-radius: 50%; background: linear-gradient(#e6c6ec 55%, #d98a9a 70%, #eee); }

.bookmarks { height: 37px; display: grid; grid-template-columns: 122px 115px 117px 93px 64px 121px 121px 66px 105px 119px 84px 121px 120px 122px 121px 121px 68px 67px 121px 123px 118px 177px 17px 12px 1fr; align-items: center; padding-left: 11px; font-size: 12px; color: #222; }
.bm { display: flex; align-items: center; gap: 4px; white-space: nowrap; overflow: hidden; letter-spacing: -.1px; }
.bm.ko { font-size: 13px; }
.bm-more { color: #666; font-size: 14px; }
.bm-sep { width: 1px; height: 22px; background: #ddd; }
.folder { width: 14px; height: 12px; background: #f1655a; border-radius: 2px; flex: none; margin-right: 2px; box-shadow: inset 0 2px 0 #f47d72; }
.ico, .ico-svg { width: 16px; height: 16px; flex: none; }
.ico { display: inline-block; font: 700 10px/16px "Liberation Sans", sans-serif; text-align: center; color: #fff; }
.ico-dr { color: #b9a6ee; background: #fff; font-size: 13px; }
.ico-2 { background: #3a82c4; font-size: 13px; }
.ico-c { background: #7b3fc0; }
.ico-p { background: #62c8a8; }
.ico-cs { background: #fff; color: #0056d2; border: 3px solid #0056d2; border-radius: 50%; line-height: 10px; font-size: 9px; }
.ico-u { background: #8a3ff0; border-radius: 50%; }
.ico-co { background: #fff; color: #f9ab00; font-size: 13px; letter-spacing: -1px; }
.ico-ib { background: #2a55c0; }
.ico-b { background: #fff; color: #111; font-size: 17px; }
.ico-aws { background: #111; color: #f5b042; font-size: 7px; }
.ico-bok { background: radial-gradient(circle at 35% 35%, #fff 10%, #2a9fdc 50%, #0a6fb0); border-radius: 50%; }
.ico-gii { background: #fff; color: #1c93dc; font-size: 11px; letter-spacing: -.5px; }
.ico-jn { background: #d8203c; border-radius: 50%; font-size: 8px; }
.ico-n { background: #7a58c4; }

/* site frame */
.site { width: 1100px; margin: 0 auto; }
.gnb-top { position: relative; height: 51px; display: flex; align-items: center; justify-content: space-between; padding-top: 1px; }
.gnb-top::after { content: ""; position: absolute; left: -730px; width: 2560px; bottom: 0; height: 1px; background: #eee; }
.logo { display: flex; align-items: center; gap: 4px; }
.logo-n { width: 16px; height: 16px; background: #000; color: #fff; font: 700 11px/16px "Liberation Sans", sans-serif; text-align: center; }
.logo-t { font: 700 14px/16px "Inter", sans-serif; color: #222; letter-spacing: -.5px; }
.top-links { display: flex; align-items: center; font-size: 12px; color: #555; }
.tl { display: flex; align-items: center; gap: 5px; padding-right: 11px; margin-right: 12px; border-right: 1px solid #eee; line-height: 14px; }
.tl svg { flex: none; }
.user { font-size: 12px; color: #777; margin: 0 23px 0 4px; }
.user b { font-size: 14.500px; font-weight: 600; color: #222; letter-spacing: -.3px; font-family: "Noto Sans", sans-serif; }
.logout { width: 68px; height: 30px; background: #fff; border: 1px solid #eee; border-radius: 2px; font: 12px "Noto Sans CJK KR", sans-serif; color: #444; padding: 0; }
.gnb { height: 81px; padding-bottom: 4px; display: flex; align-items: center; gap: 19.500px; font-size: 16px; letter-spacing: -.7px; color: #666; }
.rule { height: 1px; background: #eee; margin-top: -1px; position: relative; }
.gi { display: flex; align-items: center; position: relative; line-height: 24px; }
.gi-on { color: #6b5038; }
.gi-on::after { content: ""; position: absolute; left: 0; right: 0; bottom: -2px; height: 1px; background: #6b5038; }
.badge { width: 22px; height: 18px; margin-left: 4px; background: #6b5038; color: #fff; border-radius: 9px; font-size: 11px; font-weight: 700; line-height: 18px; text-align: center; letter-spacing: 0; }
.gi-all { margin-left: auto; display: flex; align-items: center; gap: 3px; color: #222; font-weight: 700; letter-spacing: -.4px; font-size: 16px; }

.sec-head { display: flex; justify-content: space-between; height: 70px; border-bottom: 1px solid #e5e5e5; align-items: flex-end; }
.sec-title { font-size: 20px; letter-spacing: -.9px; line-height: 30px; padding-bottom: 7px; margin-bottom: -1px; border-bottom: 2px solid #6b5038; color: #5b4a3a; }
.more { display: flex; align-items: center; gap: 4px; font-size: 15px; color: #666; margin: 0 3px 13px 0; letter-spacing: -.1px; line-height: 24px; }

/* map */
.map { position: relative; height: 400px; margin-top: 31px; overflow: hidden; }
.map-svg { display: block; }
.land, .land path { fill: #f4f4f4; }
.sea { fill: #a6d1f4; }
.parks { fill: #cfe4cf; opacity: .85; }
.ferry path { fill: none; stroke: #7d9cbd; stroke-width: 1; stroke-dasharray: 2 2; vector-effect: non-scaling-stroke; }
.rd1 path { fill: none; stroke: #f4bd7a; stroke-width: 2.800; vector-effect: non-scaling-stroke; stroke-linejoin: round; }
.rd2 path { fill: none; stroke: #fad792; stroke-width: 1.800; vector-effect: non-scaling-stroke; stroke-linejoin: round; }
.river path { fill: none; stroke: #a6d1f4; stroke-width: 2; vector-effect: non-scaling-stroke; }
.lb text { font-size: 12px; fill: #444; text-anchor: middle; paint-order: stroke; stroke: #fff; stroke-width: 2px; stroke-opacity: .85; }
.lb .lb-g { fill: #6d7688; font-size: 11px; }
.lb .lb-r { fill: #444; }
.lb .lb-b { fill: #333; font-size: 13px; }
.lb .lb-city { fill: #222; font-size: 14.500px; font-weight: 700; }
.lb .lb-do { fill: #a3a3a3; font-size: 19px; stroke-opacity: 0; }
.lb .lb-park { fill: #5e9a63; font-size: 10.500px; }
.lb .lb-hw { fill: #b8762c; font-size: 10.500px; }
.lb .lb-sea { fill: #5f7c9c; font-size: 10.500px; stroke: #a6d1f4; }
.city-dot { fill: #fff; stroke: #222; }
.town-dot { fill: #fff; stroke: #333; }
.air circle { fill: #9aa6c4; }
.air path { fill: #fff; }
.tree circle { fill: #63b26a; }
.tree path { fill: #fff; }
.shields text { font: 700 10px "Liberation Sans", sans-serif; fill: #fff; text-anchor: middle; }
.ring circle { fill: #4f7ae0; stroke: #cfdcff; stroke-width: 1.200; }
.pin { fill: #f0503c; }
.copy { font: 11px "Liberation Sans", sans-serif; fill: #333; }
.scale-t { font: 10px "Liberation Sans", sans-serif; fill: #111; text-anchor: middle; }
.scale { fill: none; stroke: #222; stroke-width: 1; }
.map-tip { position: absolute; left: 786px; top: 6px; width: 302px; height: 26px; background: #fff; border: 1px solid #d6d6d6; border-radius: 4px; font-size: 14.500px; line-height: 24px; text-align: center; color: #111; white-space: nowrap; font-weight: 500; letter-spacing: .1px; }
.zoom-ctl { position: absolute; left: 1031px; top: 294px; width: 38px; height: 78px; background: #fff; border: 1px solid #ddd; display: grid; grid-template-rows: 1fr 1fr; }
.zoom-btn { background: #fff; border: 0; padding: 0; display: flex; align-items: center; justify-content: center; }
.zoom-btn + .zoom-btn { border-top: 1px solid #e5e5e5; }

/* place head */
.place { display: flex; justify-content: space-between; align-items: flex-start; height: 146px; padding: 41px 20px 0 21px; border-bottom: 1px solid #eee; }
.place-name { font-size: 14px; line-height: 22px; color: #666; }
.place-addr { font-size: 26px; line-height: 38px; margin-top: 5px; letter-spacing: -1.200px; color: #4d3f30; }
.place-btns { display: flex; gap: 7px; margin-top: 9px; }
.btn { height: 40px; display: flex; align-items: center; justify-content: center; gap: 6px; background: #6b5038; color: #fff; font-size: 14px; border-radius: 2px; }
.btn-route { width: 99px; }
.btn-map { width: 140px; }

/* info rows */
.row { display: grid; grid-template-columns: 179px 1fr; border-bottom: 1px solid #eee; }
.row-way { height: 113px; padding-top: 26px; }
.row-tel { height: 84px; padding-top: 26px; }
.row-time { height: 172px; padding-top: 25px; }
.row-use { padding-top: 26px; border-bottom: 0; }
.lab { display: flex; align-items: flex-start; padding-left: 11px; gap: 11px; font-size: 14px; line-height: 30px; color: #111; font-weight: 500; height: 30px; }
.lab-ico { width: 15px; height: 15px; margin-top: 7px; flex: none; }
.dot { width: 7px; height: 7px; border-radius: 50%; background: #e8173f; margin: 9px 0 0 -7px; }
.val { font-size: 14px; line-height: 30px; color: #555; }
.tight { letter-spacing: -.5px; word-spacing: -1px; }
.key { color: #888; display: inline-block; }
.key-park { margin-right: 19px; }
.num { letter-spacing: -.5px; }
.hour { display: grid; grid-template-columns: 63px 1fr; }
.amen { display: grid; grid-template-columns: 82px 83px 73px 88px; padding-left: 9px; }
.am { width: 60px; display: flex; flex-direction: column; align-items: center; font-size: 13px; color: #555; letter-spacing: -.7px; white-space: nowrap; }
.am-wide { width: 88px; }
.am-ico { margin-top: 4px; margin-bottom: 16px; }
.am span { line-height: 20px; }
.free { font: 700 9.500px "Liberation Sans", sans-serif; text-anchor: middle; fill: #222; letter-spacing: -.3px; }

/* floating */
.float-btns { position: fixed; left: 2450px; top: 1130px; display: flex; flex-direction: column; gap: 14px; }
.fab { width: 60px; height: 60px; border-radius: 50%; display: flex; flex-direction: column; align-items: center; justify-content: center; box-shadow: 0 4px 12px rgba(0,0,0,.2); }
.fab-brown { background: #6b5038; }
.fab-top { background: #fff; color: #111; font: 500 15px/16px "Inter", sans-serif; gap: 1px; }
.scroll-thumb { position: fixed; left: 2554px; top: 930px; width: 5px; height: 297px; background: #cdcdcd; border-radius: 0 0 3px 3px; }
```
